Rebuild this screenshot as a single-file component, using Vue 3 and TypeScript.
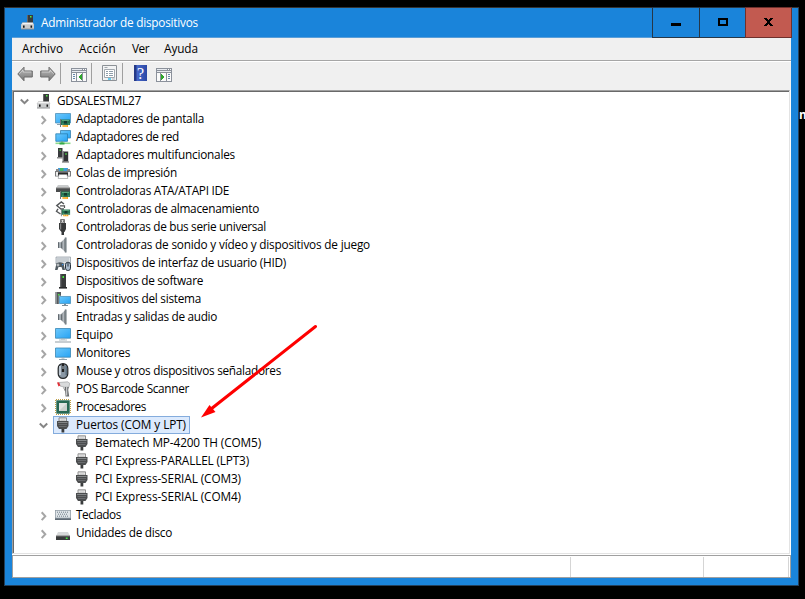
<script setup lang="ts">
import { onMounted, ref } from 'vue'

interface Label { text: string; width: number }
interface Device extends Label { icon: string; level: number; open?: boolean; selected?: boolean }

const menus: Label[] = [
  { text: 'Archivo', width: 41 },
  { text: 'Acción', width: 37 },
  { text: 'Ver', width: 17 },
  { text: 'Ayuda', width: 34 },
]

const devices: Device[] = [
  { text: 'GDSALESTML27', width: 84, icon: 'computer', level: 0, open: true },
  { text: 'Adaptadores de pantalla', width: 128, icon: 'display', level: 1 },
  { text: 'Adaptadores de red', width: 103, icon: 'network', level: 1 },
  { text: 'Adaptadores multifuncionales', width: 159, icon: 'multi', level: 1 },
  { text: 'Colas de impresión', width: 101, icon: 'printer', level: 1 },
  { text: 'Controladoras ATA/ATAPI IDE', width: 153, icon: 'ata', level: 1 },
  { text: 'Controladoras de almacenamiento', width: 183, icon: 'storage', level: 1 },
  { text: 'Controladoras de bus serie universal', width: 190, icon: 'usb', level: 1 },
  { text: 'Controladoras de sonido y vídeo y dispositivos de juego', width: 294, icon: 'speaker', level: 1 },
  { text: 'Dispositivos de interfaz de usuario (HID)', width: 210, icon: 'hid', level: 1 },
  { text: 'Dispositivos de software', width: 127, icon: 'tower', level: 1 },
  { text: 'Dispositivos del sistema', width: 125, icon: 'system', level: 1 },
  { text: 'Entradas y salidas de audio', width: 141, icon: 'speaker', level: 1 },
  { text: 'Equipo', width: 37, icon: 'pc', level: 1 },
  { text: 'Monitores', width: 54, icon: 'monitor', level: 1 },
  { text: 'Mouse y otros dispositivos señaladores', width: 205, icon: 'mouse', level: 1 },
  { text: 'POS Barcode Scanner', width: 113, icon: 'scanner', level: 1 },
  { text: 'Procesadores', width: 70, icon: 'cpu', level: 1 },
  { text: 'Puertos (COM y LPT)', width: 110, icon: 'port', level: 1, open: true, selected: true },
  { text: 'Bematech MP-4200 TH (COM5)', width: 166, icon: 'port', level: 2 },
  { text: 'PCI Express-PARALLEL (LPT3)', width: 154, icon: 'port', level: 2 },
  { text: 'PCI Express-SERIAL (COM3)', width: 146, icon: 'port', level: 2 },
  { text: 'PCI Express-SERIAL (COM4)', width: 146, icon: 'port', level: 2 },
  { text: 'Teclados', width: 45, icon: 'keyboard', level: 1 },
  { text: 'Unidades de disco', width: 96, icon: 'disk', level: 1 },
]

const root = ref<HTMLElement | null>(null)

/* Tracks every label so that it fills its intended run width. */
onMounted(() => {
  root.value?.querySelectorAll<HTMLElement>('[data-width]').forEach((el) => {
    const target = Number(el.dataset.width)
    const natural = el.getBoundingClientRect().width
    el.style.letterSpacing = `${(target - natural) / (el.textContent ?? ' ').length}px`
  })
})
</script>

<template>
  <div ref="root" class="desktop">
    <svg class="defs" width="0" height="0">
      <defs>
        <linearGradient id="screen" x1="0" y1="0" x2="1" y2="1">
          <stop offset="0" stop-color="#6cc8fb" /><stop offset="1" stop-color="#27a3f4" />
        </linearGradient>
        <linearGradient id="metal" x1="0" y1="0" x2="1" y2="0">
          <stop offset="0" stop-color="#50575c" /><stop offset=".5" stop-color="#b9bfc4" /><stop offset="1" stop-color="#697177" />
        </linearGradient>
        <linearGradient id="arrowfill" x1="0" y1="0" x2="0" y2="1">
          <stop offset="0" stop-color="#bdbdbd" /><stop offset="1" stop-color="#777" />
        </linearGradient>
        <symbol id="card" viewBox="0 0 10 8">
          <path d="M0 0h1v8H0z" fill="#777" /><path d="M1 .5h9V6H1z" fill="#277354" />
          <path d="M2 1.5h7M2 5h1.5M8 5h1.5" stroke="#70b78c" stroke-width=".7" />
          <path d="M4 2h3v2.5H4z" fill="#153d2f" /><path d="M2.5 6H8v2H2.5z" fill="#f5a320" />
          <path d="M4 6v2M6 6v2" stroke="#fff0b0" stroke-width=".5" />
        </symbol>
        <symbol id="computer" viewBox="0 0 16 16">
          <path d="M7 1h6v8H7z" fill="#393b3c" /><path d="M7 1h1v8H7z" fill="#666" />
          <path d="M10 2h1.5v1.5H10z" fill="#52ee46" />
          <path d="M2.5 8.5h10.3L14 11H1z" fill="#f3f3f3" stroke="#999" stroke-width=".4" />
          <path d="M1 10.5h13V15H1z" fill="#c9cbcc" /><path d="M1 14.5h13v1H1z" fill="#919394" />
          <path d="M3 11.5h1.6v2.2H3zM10.5 11.5h1.6v2.2h-1.6z" fill="#161616" />
        </symbol>
        <symbol id="display" viewBox="0 0 16 16">
          <path d="M.5 2.5h15v9.5H.5z" fill="url(#screen)" stroke="#4e91b9" stroke-width=".8" />
          <path d="M2 13.5h4" stroke="#8aa0ad" /><use href="#card" x="5" y="8" width="10" height="8" />
        </symbol>
        <symbol id="network" viewBox="0 0 16 16">
          <path d="M5.5 1.5h10V9h-10z" fill="url(#screen)" stroke="#3883b0" stroke-width=".8" />
          <path d="M.8 4.8h11.7v7.5H.8z" fill="url(#screen)" stroke="#2a7fb3" stroke-width=".8" />
          <path d="M6 12.5h2v1.2H6z" fill="#68a976" /><path d="M.5 14.3h15" stroke="#8bd88b" stroke-width="1.6" />
          <path d="M4.5 13.5h5v2h-5z" fill="#34a84b" />
        </symbol>
        <symbol id="multi" viewBox="0 0 16 16">
          <path d="M3 1h4.5v9H3z" fill="#393b3d" /><path d="M2 10h5.5v1.5H2z" fill="#8b8b8b" />
          <path d="M4.5 2.5H6v1.3H4.5z" fill="#55e74b" />
          <path d="M7.8 4.5h5.4v10H7.8z" fill="#303234" /><path d="M7.8 4.5h1.2v10H7.8z" fill="#717477" />
          <path d="M7 14.5h7v1H7z" fill="#555" /><path d="M10.3 6.2h1.4v1.5h-1.4z" fill="#55e74b" />
        </symbol>
        <symbol id="printer" viewBox="0 0 16 16">
          <path d="M3 3h10v4H3z" fill="#3f9edb" /><path d="M5 3h3.5v4H5z" fill="#43b865" />
          <path d="M1 4h3v3H1zM12 4h3v3h-3z" fill="#8a8a8a" /><path d="M0 6h16v5.5H0z" fill="#77797b" />
          <path d="M1 7h14v3.8H1z" fill="#ececec" /><path d="M3 7.3h10v3.7H3z" fill="#292a2b" />
          <path d="M4 9.5h8l.8 4H3.2z" fill="#fff" stroke="#8b8e90" stroke-width=".6" />
        </symbol>
        <symbol id="ata" viewBox="0 0 16 16">
          <path d="M3 2h10l2 3H1z" fill="#c9cbcc" /><path d="M1 5h14v4H1z" fill="#4a4c4d" />
          <path d="M1 4.5h14v1H1z" fill="#888" /><use href="#card" x="5" y="8" width="10" height="8" />
        </symbol>
        <symbol id="storage" viewBox="0 0 16 16">
          <path d="M9 3L6.3.9 1.8 4.6 6 8h3M3 7.8l-1.5 2.4L5.5 13" fill="none" stroke="#55585a" stroke-width="1.4" />
          <path d="M5 4.8h4.5V7" fill="none" stroke="#555" stroke-width="1.2" />
          <use href="#card" x="5.5" y="8" width="10" height="7.5" />
        </symbol>
        <symbol id="usb" viewBox="0 0 16 16">
          <path d="M5.5.5h4v3.5h-4z" fill="#ddd" stroke="#777" /><path d="M6.5 1.5v1.2M8.5 1.5v1.2" stroke="#444" />
          <path d="M4 4h7v6l-1.5 3H9v3H6.5v-3L4 10z" fill="#37393a" /><path d="M5 4.5h1.2v6H5z" fill="#858789" />
        </symbol>
        <symbol id="speaker" viewBox="0 0 16 16">
          <path d="M3 5.2h3v5.8H3z" fill="#a5adb3" /><path d="M3 5.2h1v5.8H3z" fill="#62696f" />
          <path d="M6 5.2L10.5 .8v14.4L6 11z" fill="url(#metal)" />
          <path d="M10 .5h1.7v15H10z" fill="#8e979d" /><path d="M10.2 .5v15" stroke="#5e6468" stroke-width=".6" />
        </symbol>
        <symbol id="hid" viewBox="0 0 16 16">
          <path d="M1 2h14.5v7H1z" fill="#dfe4e8" stroke="#8d969d" stroke-width=".7" />
          <path d="M2.5 4h12M2.5 6h12" stroke="#7f8991" stroke-dasharray="1 1" />
          <path d="M1.5 8Q5 6.5 8.5 8l1.5 7H7.5L6.5 12h-3l-1 3H0z" fill="#515b62" />
          <path d="M1.5 10h3M3 8.5v3" stroke="#fff" stroke-width=".7" /><path d="M7 9h1.3v1.3H7z" fill="#3a8fe8" />
          <rect x="10.5" y="7.3" width="5" height="8.2" rx="2.3" fill="#a8b9ca" stroke="#28333d" />
          <path d="M13 7.5v4" stroke="#26333e" />
        </symbol>
        <symbol id="tower" viewBox="0 0 16 16">
          <path d="M5 1h6v13H5z" fill="#393b3c" /><path d="M5 1h1.3v13H5z" fill="#696c6e" />
          <path d="M7.5 3H9v2H7.5z" fill="#45ee3a" /><path d="M4 14h8v1.6H4z" fill="#292b2c" />
        </symbol>
        <symbol id="system" viewBox="0 0 16 16">
          <path d="M.5 1H6v12H.5z" fill="#55595c" /><path d="M.5 1H2v12H.5z" fill="#8b9194" />
          <path d="M3 3h1.5v1.5H3z" fill="#4de645" />
          <path d="M4.5 5.5h11v7h-11z" fill="url(#screen)" stroke="#e5f3fa" stroke-width="1.4" />
          <path d="M4.5 5.5h11v7h-11z" fill="url(#screen)" stroke="#377fa9" stroke-width=".6" />
          <path d="M7 14.5h6M9 13.5h2" stroke="#7e8e98" />
        </symbol>
        <symbol id="pc" viewBox="0 0 16 16">
          <path d="M.5 1.5h15v9.7H.5z" fill="url(#screen)" stroke="#3986b4" stroke-width=".8" />
          <path d="M6 12h4M4 13h8" stroke="#a0adb5" stroke-width=".8" /><path d="M0 15h16" stroke="#aab4ba" stroke-width="1.3" />
        </symbol>
        <symbol id="monitor" viewBox="0 0 16 16">
          <path d="M.5 3h15v9.2H.5z" fill="url(#screen)" stroke="#3986b4" stroke-width=".8" />
          <path d="M6.5 13h3" stroke="#94a6b2" /><path d="M4 14.5h8" stroke="#748b99" stroke-width=".8" />
        </symbol>
        <symbol id="mouse" viewBox="0 0 16 16">
          <rect x="3.2" y=".7" width="9.6" height="14.6" rx="4.6" fill="#8a98a5" stroke="#26292b" stroke-width="1.2" />
          <path d="M5 3v9" stroke="#d1dae2" stroke-width="1.5" /><path d="M11.2 3v9" stroke="#566a7a" stroke-width="1.3" />
          <path d="M8 1v8" stroke="#222" stroke-width="2.4" /><path d="M8 3v3" stroke="#bdcbd6" />
        </symbol>
        <symbol id="scanner" viewBox="0 0 16 16">
          <path d="M4 1.5L12.5.8l2.2 1.4-.8 4H9.5L5 5z" fill="#d9dbdc" stroke="#96999b" stroke-width=".6" />
          <path d="M9.8 6h4l-.6 3 1 6.5h-3.6z" fill="#686c6e" /><path d="M11 6h1.3v8.5H11z" fill="#c6c8ca" />
          <path d="M8.5 6.5l1.7 3.5" stroke="#777" stroke-width=".8" /><path d="M2 1.5l2-.3L5.3 4.500 3.500 5.500z" fill="#e02e35" />
        </symbol>
        <symbol id="cpu" viewBox="0 0 16 16">
          <path d="M1 .5h14M1 15.5h14M.5 1v14M15.500 1v14" stroke="#bf9e43" stroke-dasharray="1 1" />
          <path d="M1.300 1.300h13.400v13.400H1.300z" fill="#276853" />
          <path d="M4 4h8v8H4z" fill="#e2e5e4" /><path d="M4 12l8-8v8z" fill="#cbd0ce" />
        </symbol>
        <symbol id="port" viewBox="0 0 16 16">
          <path d="M4 .8h7.500v3.400H4z" fill="#f1f1f1" stroke="#777" stroke-width=".8" />
          <path d="M5.500 1.800h5M6.500 3h4" stroke="#999" stroke-width=".7" stroke-dasharray="1 1" />
          <path d="M2 4h11.500v5l-2 3h-7.500L2 9z" fill="#4b4d4e" /><path d="M3 5h9.500v1H3z" fill="#85888a" />
          <path d="M3.500 7.500h8.500M4 9.500h7.500" stroke="#717476" stroke-width=".8" />
          <path d="M6.500 12h2.800v3.500H6.500z" fill="#3a3c3d" />
        </symbol>
        <symbol id="keyboard" viewBox="0 0 16 16">
          <path d="M0 3h16v10H0z" fill="#8b97a1" /><path d="M.7 3.700h14.600v7H.7z" fill="#dfe4e8" />
          <path d="M2 5.200h12M3 7.200h10M2 9.200h12" stroke="#6f7d89" stroke-dasharray="1 1" />
          <path d="M0 11.500h16V13H0z" fill="#606b75" />
        </symbol>
        <symbol id="disk" viewBox="0 0 16 16">
          <path d="M3 7h10l2 4H1z" fill="#d7d9da" /><path d="M1 11h14v4H1z" fill="#393b3c" />
          <path d="M1 10.500h14v1H1z" fill="#777" /><path d="M10.800 12.500h1.800V14h-1.800z" fill="#43ed42" />
        </symbol>
      </defs>
    </svg>

    <main class="window">
      <header class="titlebar">
        <svg class="icon"><use href="#computer" /></svg>
        <span class="title"><span data-width="157">Administrador de dispositivos</span></span>
        <div class="controls">
          <button class="ctl min" aria-label="Minimizar"><i /></button>
          <button class="ctl max" aria-label="Maximizar"><i /></button>
          <button class="ctl close" aria-label="Cerrar">
            <svg width="9" height="8" viewBox="0 0 9 8" shape-rendering="crispEdges">
              <path d="M0 0h3v1h1v1h1V1h1V0h3v1H8v1H7v1H6v2h1v1h1v1h1v1H6V7H5V6H4v1H3v1H0V7h1V6h1V5h1V3H2V2H1V1H0z" />
            </svg>
          </button>
        </div>
      </header>

      <nav class="menubar">
        <span v-for="m in menus" :key="m.text" class="menu"><span :data-width="m.width">{{ m.text }}</span></span>
      </nav>

      <div class="toolbar">
        <svg class="arrow" width="16" height="16" viewBox="0 0 16 16"><path d="M.8 8L7 1.200V5h8.300v6H7v3.800z" fill="url(#arrowfill)" stroke="#6b6b6b" /><path d="M2.400 7.800L6 4v2h8.200" fill="none" stroke="#ddd" stroke-width=".7" /></svg>
        <svg class="arrow fwd" width="16" height="16" viewBox="0 0 16 16"><path d="M15.200 8L9 1.200V5H.7v6H9v3.800z" fill="url(#arrowfill)" stroke="#6b6b6b" /><path d="M1.800 6H10V4l3.600 3.800" fill="none" stroke="#ddd" stroke-width=".7" /></svg>
        <i class="sep" />
        <svg class="panel" width="16" height="14" viewBox="0 0 16 14" shape-rendering="crispEdges"><path d="M0 0h16v14H0z" fill="#8b919b" /><path d="M1 1h10v1H1zM1 3h14v1H1z" fill="#e8ebf0" /><path d="M12 1h1v1h-1zM14 1h1v1h-1z" fill="#fff" /><path d="M1 5h4v8H1zM6 5h5v8H6zM12 5h3v8h-3z" fill="#fafafa" /><path d="M2 6h2v1H2zM2 8h2v1H2zM2 10h2v1H2z" fill="#6687ab" /><path d="M11 6v6L7 9z" fill="#2da52d" /></svg>
        <i class="sep" />
        <svg class="props" width="15" height="16" viewBox="0 0 15 16"><path d="M.5.5h14v15H.5z" fill="#f2f3f4" stroke="#8c9196" /><path d="M2.500 2.500h3M2.500 4.500h10v8h-10z" fill="#fff" stroke="#a2a8ae" /><path d="M4 6.500h2M7 6.500h4M4 8.500h2M7 8.500h4M4 10.500h2M7 10.500h4" stroke="#8f9eaa" /><path d="M6 14h3" stroke="#39bdea" stroke-width="1.500" /><path d="M10 14h3" stroke="#acb6bd" /></svg>
        <i class="sep last" />
        <span class="help">?</span>
        <svg class="panel2" width="16" height="14" viewBox="0 0 16 14" shape-rendering="crispEdges"><path d="M0 0h16v14H0z" fill="#8b919b" /><path d="M1 1h10v1H1zM1 3h14v1H1z" fill="#e8ebf0" /><path d="M12 1h1v1h-1zM14 1h1v1h-1z" fill="#fff" /><path d="M1 5h3v8H1zM5 5h5v8H5zM11 5h4v8h-4z" fill="#fafafa" /><path d="M12 6h2v1h-2zM12 8h2v1h-2zM12 10h2v1h-2z" fill="#6687ab" /><path d="M5 6v6l4-3z" fill="#2da52d" /></svg>
      </div>

      <section class="tree">
        <div v-for="d in devices" :key="d.text" class="row" :class="'level' + d.level">
          <svg class="chevron" width="12" height="18" viewBox="0 0 12 18">
            <path v-if="d.open" d="M1.800 7.500l3.700 3.700 3.700-3.700" class="down" />
            <path v-else-if="d.level === 1" d="M3.700 6.300L7.300 10.200l-3.600 3.900" class="right" />
          </svg>
          <div class="item" :class="{ selected: d.selected }">
            <svg class="icon"><use :href="'#' + d.icon" /></svg>
            <span class="label" :data-width="d.width">{{ d.text }}</span>
          </div>
        </div>
      </section>

      <footer class="status"><i class="cell wide" /><i class="cell mid" /><i class="cell end" /></footer>
    </main>

    <aside class="behind">m</aside>
    <svg class="pointer" width="805" height="599" viewBox="0 0 805 599">
      <path d="M315.500 326.500L211 409" stroke="#fe0000" stroke-width="3" stroke-linecap="round" />
      <path d="M201 417.500l8.500-12.500 6 7z" fill="#fe0000" />
    </svg>
  </div>
</template>

<style>
body { margin: 0; background: #000; overflow: hidden; }
</style>

<style scoped>
* { box-sizing: border-box; }
.desktop {
  position: relative; display: flex; width: 805px; height: 599px; padding: 7px 0 0 4px;
  overflow: hidden; background: #000; color: #000;
  font-family: "Open Sans", "Noto Sans", sans-serif; font-size: 11.8px;
}
.defs { position: absolute; }
.window {
  display: flex; flex: none; flex-direction: column; width: 795px; height: 579px;
  padding: 0 7px 7px; border: 1px solid #24405c; border-top-color: #343434; background: #1a84da;
}
.icon { flex: none; width: 16px; height: 16px; }
.titlebar { display: flex; flex: none; align-items: flex-start; height: 30px; padding-left: 8px; margin-right: -1px; border-bottom: 1px solid #5b9fd9; }
.titlebar .icon { margin-top: 6px; }
.title { margin: 6px 0 0 5px; line-height: 16px; color: #fff; white-space: nowrap; }
.controls { display: flex; margin: -1px 0 0 auto; }
.ctl { display: flex; align-items: center; justify-content: center; width: 47px; height: 31px; padding: 0; border: 1px solid #263747; border-right: 0; background: #1a84da; }
.ctl.max { width: 46px; }
.ctl.close { width: 47px; border: 1px solid #6f302c; background: #c25a50; }
.min i { width: 10px; height: 3px; margin-top: 3px; background: #000; }
.max i { width: 10px; height: 8px; margin-top: -1px; border: 2px solid #000; }
.close svg { margin-top: -1px; }
.menubar { display: flex; flex: none; gap: 16px; height: 23px; padding: 2px 0 0 10px; border-bottom: 1px solid #a6a6a6; background: #f0f0f0; line-height: 17px; }
.menu:nth-child(1) { width: 41px; }
.menu:nth-child(2) { width: 37px; }
.menu:nth-child(3) { width: 16px; }
.menu { white-space: nowrap; }
.toolbar { display: flex; flex: none; align-items: flex-start; height: 29px; padding: 4px 0 0 5px; border-top: 1px solid #fff; background: #f0f0f0; }
.fwd { margin-left: 7px; }
.sep { width: 1px; height: 21px; margin: -3px 0 0 4px; background: #a0a0a0; }
.sep.last { margin-left: 5px; }
.panel { margin: 2px 0 0 10px; }
.props { margin: -1px 0 0 10px; }
.help { width: 13px; height: 16px; margin: -1px 0 0 11px; background: linear-gradient(90deg, #263a88 0 2px, #4668ca 3px, #2c48a5); color: #fff; font: 16px/17px "Liberation Serif", serif; text-align: center; }
.panel2 { margin: 2px 0 0 9px; }
.tree { flex: none; height: 464px; margin-right: 1px; padding-top: 1px; border: 1px solid; border-color: #a0a0a0 #e3e3e3 #e3e3e3 #a0a0a0; box-shadow: inset 1px 1px #696969, 1px 1px #fff, 0 1px #fff, 1px 0 #fff; background: #fff; }
.row { display: flex; height: 18px; }
.level0 { padding-left: 6px; }
.level1 { padding-left: 25px; }
.level2 { padding-left: 44px; }
.chevron { flex: none; }
.chevron path { fill: none; stroke: #a6a6a6; stroke-width: 2; }
.chevron .down { stroke: #858585; }
.item { display: flex; align-items: center; height: 18px; margin-left: 3px; padding: 0 4px 0 2px; }
.label { margin: -2px 0 0 5px; line-height: 16px; white-space: nowrap; }
.selected { background: #dceafd; box-shadow: inset 0 0 0 1px #84acdd; }
.status { display: flex; flex: none; height: 23px; padding: 1px 0 0; margin-top: 1px; border: 1px solid #a0a0a0; background: #fff; }
.cell { height: 20px; border-right: 1px solid #d5d5d5; }
.wide { width: 558px; }
.mid { width: 133px; }
.end { width: 85px; }
.behind { flex: none; margin: 100px 0 0; color: #fff; font: bold 12px/16px "Open Sans", sans-serif; }
.pointer { position: absolute; inset: 0; pointer-events: none; }
</style>
